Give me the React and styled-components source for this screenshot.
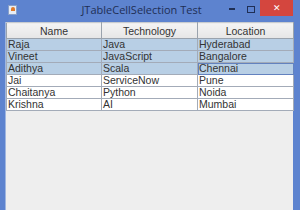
import styled, { createGlobalStyle } from "styled-components";

const Global = createGlobalStyle`
  html, body { margin:0; padding:0; background:#5d83cf; }
  #root { width:300px; height:210px; }
`;

const Frame = styled.div`
  width:300px;
  height:210px;
  box-sizing:border-box;
  background:#5d83cf;
  display:flex;
  flex-direction:column;
  padding:0 7px 0 5px;
`;

const TitleBar = styled.div`
  height:22px;
  display:flex;
  align-items:flex-start;
`;

const AppIcon = styled.div`
  width:9px;
  height:10px;
  margin:5px 0 0 3px;
  background:#e8edf5;
  border:1px solid #8aa0c8;
  box-sizing:border-box;
  position:relative;
  &::after{
    content:"";
    position:absolute;
    left:2px; top:1px;
    width:4px; height:4px;
    background:#e07a2a;
    border-radius:2px 2px 0 0;
  }
`;

const Title = styled.div`
  flex:1;
  text-align:center;
  font-family:"Open Sans", "Liberation Sans", sans-serif;
  font-size:11px;
  line-height:22px;
  color:#1f2f55;
  padding-left:44px;
  margin-top:-1px;
`;

const WinBtn = styled.div`
  width:${p => p.$w || 19}px;
  height:16px;
  display:flex;
  align-items:center;
  justify-content:center;
  background:${p => p.$close ? "#d4463e" : "transparent"};
  color:${p => p.$close ? "#fff" : "#1f2f55"};
  font-family:"Liberation Sans", sans-serif;
  font-size:9px;
`;

const MinBar = styled.div`
  width:6px; height:2px; background:#1f2f55; margin-top:2px;
`;

const MaxBox = styled.div`
  width:6px; height:5px; border:1px solid #1f2f55; margin-top:2px;
`;

const Body = styled.div`
  flex:1;
  background:#eeeeee;
  border-left:1px solid #9fb6e0;
`;

const Table = styled.table`
  width:287px;
  border-collapse:collapse;
  table-layout:fixed;
  font-family:"Liberation Sans", Arial, sans-serif;
  font-size:10.5px;
  color:#333;
`;

const Th = styled.th`
  height:15px;
  padding:0;
  font-weight:normal;
  background:linear-gradient(#f4f4f4, #e6e6e6);
  border:1px solid #9aa3ad;
  border-top-color:#c8ccd0;
  text-align:center;
  color:#333;
`;

const Td = styled.td`
  height:11px;
  padding:0 1px;
  line-height:11px;
  border:1px solid #a3abb8;
  border-top:none;
  background:${p => p.$sel ? "#b8cfe5" : "#ffffff"};
  outline:${p => p.$focus ? "1px solid #6382bf" : "none"};
  outline-offset:-1px;
  white-space:nowrap;
  overflow:hidden;
`;

const rows = [
  ["Raja", "Java", "Hyderabad"],
  ["Vineet", "JavaScript", "Bangalore"],
  ["Adithya", "Scala", "Chennai"],
  ["Jai", "ServiceNow", "Pune"],
  ["Chaitanya", "Python", "Noida"],
  ["Krishna", "AI", "Mumbai"],
];

export default function App() {
  return (
    <>
      <Global />
      <Frame>
        <TitleBar>
          <AppIcon />
          <Title>JTableCellSelection Test</Title>
          <WinBtn><MinBar /></WinBtn>
          <WinBtn><MaxBox /></WinBtn>
          <WinBtn $close $w={33}>✕</WinBtn>
        </TitleBar>
        <Body>
          <Table>
            <colgroup>
              <col style={{ width: 95 }} />
              <col style={{ width: 96 }} />
              <col style={{ width: 96 }} />
            </colgroup>
            <thead>
              <tr>
                <Th>Name</Th>
                <Th>Technology</Th>
                <Th>Location</Th>
              </tr>
            </thead>
            <tbody>
              {rows.map((r, i) => (
                <tr key={r[0]}>
                  {r.map((c, j) => (
                    <Td key={j} $sel={i < 3} $focus={i === 2 && j === 2}>{c}</Td>
                  ))}
                </tr>
              ))}
            </tbody>
          </Table>
        </Body>
      </Frame>
    </>
  );
}
